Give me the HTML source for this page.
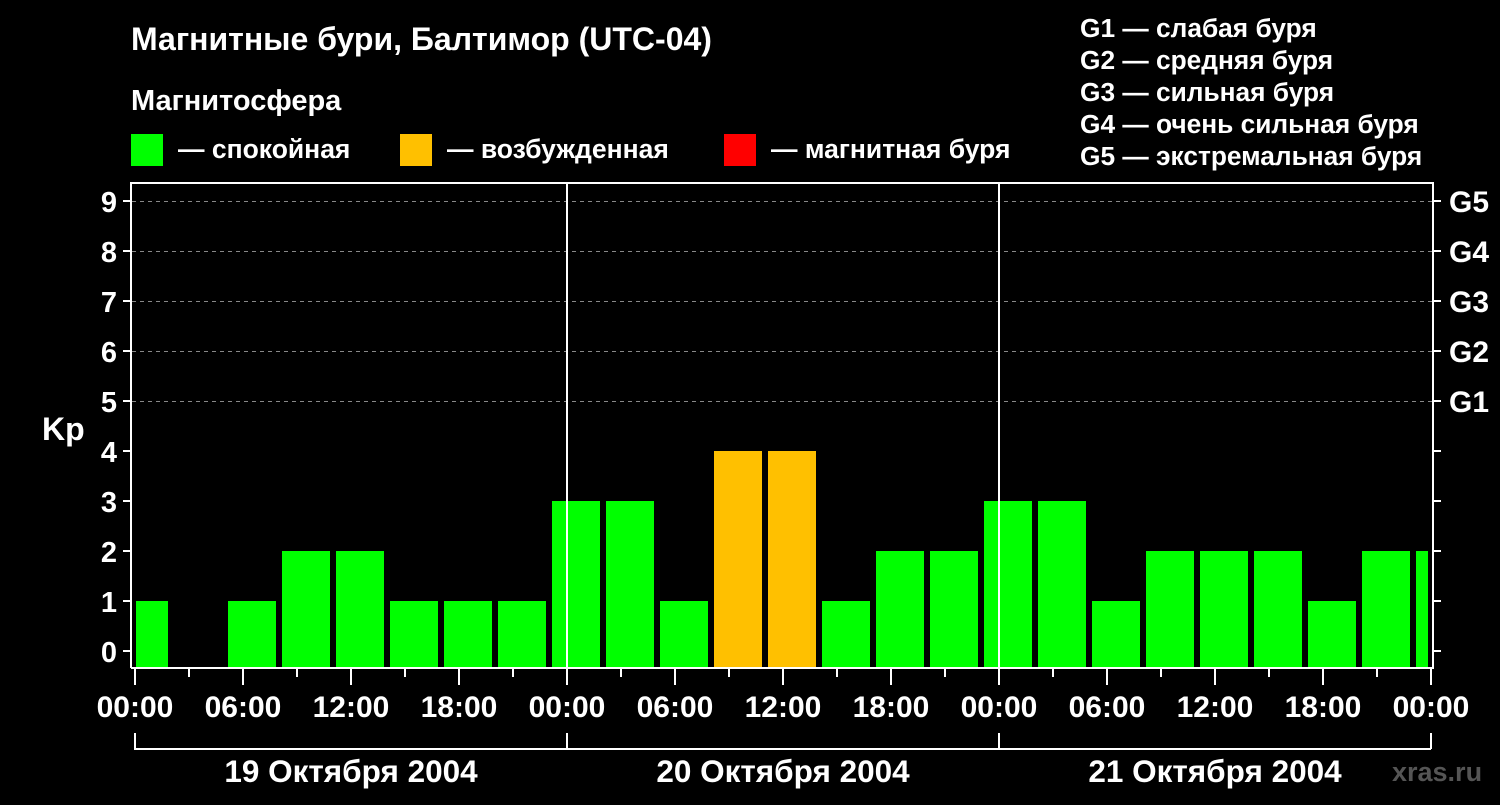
<!DOCTYPE html>
<html><head><meta charset="utf-8"><style>body{margin:0;background:#000;width:1500px;height:800px;overflow:hidden}</style></head><body>
<svg width="1500" height="800" xmlns="http://www.w3.org/2000/svg" font-family="Liberation Sans, sans-serif" font-weight="bold" fill="#fff">
<rect width="1500" height="800" fill="#000"/>
<text x="131" y="50" font-size="32">Магнитные бури, Балтимор (UTC-04)</text>
<text x="131" y="110" font-size="29">Магнитосфера</text>
<rect x="131" y="134" width="32" height="32" fill="#00ff00"/><text x="178" y="158" font-size="26.5">— спокойная</text>
<rect x="400" y="134" width="32" height="32" fill="#ffc000"/><text x="447" y="158" font-size="26.5">— возбужденная</text>
<rect x="724" y="134" width="32" height="32" fill="#ff0000"/><text x="771" y="158" font-size="26.5">— магнитная буря</text>
<g font-size="26.3"><text x="1080" y="37">G1 — слабая буря</text><text x="1080" y="69">G2 — средняя буря</text><text x="1080" y="101">G3 — сильная буря</text><text x="1080" y="133">G4 — очень сильная буря</text><text x="1080" y="165">G5 — экстремальная буря</text></g>
<g stroke="#888" stroke-dasharray="4,4" stroke-width="1"><line x1="132" x2="1432" y1="201.5" y2="201.5"/><line x1="132" x2="1432" y1="251.5" y2="251.5"/><line x1="132" x2="1432" y1="301.5" y2="301.5"/><line x1="132" x2="1432" y1="351.5" y2="351.5"/><line x1="132" x2="1432" y1="401.5" y2="401.5"/></g>
<g fill="#00ff00">
<rect x="136" y="601" width="32" height="67"/>
<rect x="228" y="601" width="48" height="67"/><rect x="282" y="551" width="48" height="117"/><rect x="336" y="551" width="48" height="117"/><rect x="390" y="601" width="48" height="67"/><rect x="444" y="601" width="48" height="67"/><rect x="498" y="601" width="48" height="67"/><rect x="552" y="501" width="48" height="167"/><rect x="606" y="501" width="48" height="167"/><rect x="660" y="601" width="48" height="67"/>
<rect x="714" y="451" width="48" height="217" fill="#ffc000"/><rect x="768" y="451" width="48" height="217" fill="#ffc000"/>
<rect x="822" y="601" width="48" height="67"/><rect x="876" y="551" width="48" height="117"/><rect x="930" y="551" width="48" height="117"/><rect x="984" y="501" width="48" height="167"/><rect x="1038" y="501" width="48" height="167"/><rect x="1092" y="601" width="48" height="67"/><rect x="1146" y="551" width="48" height="117"/><rect x="1200" y="551" width="48" height="117"/><rect x="1254" y="551" width="48" height="117"/><rect x="1308" y="601" width="48" height="67"/><rect x="1362" y="551" width="48" height="117"/><rect x="1416" y="551" width="12" height="117"/>
</g>
<g stroke="#fff" stroke-width="2" fill="none">
<path d="M131 668V183H1433V668H131"/>
<line x1="567" y1="183" x2="567" y2="668"/><line x1="999" y1="183" x2="999" y2="668"/>
<path d="M123 201h8M123 251h8M123 301h8M123 351h8M123 401h8M123 451h8M123 501h8M123 551h8M123 601h8M123 651h8"/>
<path d="M1433 201h8M1433 251h8M1433 301h8M1433 351h8M1433 401h8M1433 451h8M1433 501h8M1433 551h8M1433 601h8M1433 651h8"/>
<path d="M135 668v17M243 668v17M351 668v17M459 668v17M567 668v17M675 668v17M783 668v17M891 668v17M999 668v17M1107 668v17M1215 668v17M1323 668v17M1431 668v17"/>
<path d="M189 668v9M297 668v9M405 668v9M513 668v9M621 668v9M729 668v9M837 668v9M945 668v9M1053 668v9M1161 668v9M1269 668v9M1377 668v9"/>
<path d="M135 733v16H1431M567 733v16M999 733v16M1431 733v16"/>
</g>
<g font-size="29" text-anchor="end"><text x="117" y="212">9</text><text x="117" y="262">8</text><text x="117" y="312">7</text><text x="117" y="362">6</text><text x="117" y="412">5</text><text x="117" y="462">4</text><text x="117" y="512">3</text><text x="117" y="562">2</text><text x="117" y="612">1</text><text x="117" y="662">0</text></g>
<text x="42" y="440" font-size="32">Kp</text>
<g font-size="30"><text x="1449" y="212">G5</text><text x="1449" y="262">G4</text><text x="1449" y="312">G3</text><text x="1449" y="362">G2</text><text x="1449" y="412">G1</text></g>
<g font-size="30" text-anchor="middle"><text x="135" y="717">00:00</text><text x="243" y="717">06:00</text><text x="351" y="717">12:00</text><text x="459" y="717">18:00</text><text x="567" y="717">00:00</text><text x="675" y="717">06:00</text><text x="783" y="717">12:00</text><text x="891" y="717">18:00</text><text x="999" y="717">00:00</text><text x="1107" y="717">06:00</text><text x="1215" y="717">12:00</text><text x="1323" y="717">18:00</text><text x="1431" y="717">00:00</text>
<text x="351" y="782" font-size="31.5">19 Октября 2004</text><text x="783" y="782" font-size="31.5">20 Октября 2004</text><text x="1215" y="782" font-size="31.5">21 Октября 2004</text></g>
<text x="1392" y="781" font-size="27" fill="#555">xras.ru</text>
</svg>
</body></html>
